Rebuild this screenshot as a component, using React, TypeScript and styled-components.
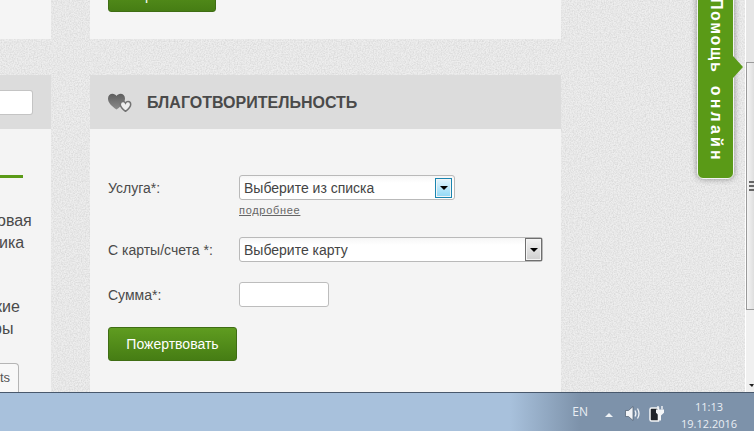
import React from 'react';
import styled, { createGlobalStyle } from 'styled-components';

const grain =
  "data:image/svg+xml,%3Csvg xmlns='http://www.w3.org/2000/svg' width='300' height='300'%3E%3Cfilter id='n'%3E%3CfeTurbulence type='fractalNoise' baseFrequency='.75' numOctaves='3' stitchTiles='stitch'/%3E%3CfeColorMatrix values='0 0 0 0 .5 0 0 0 0 .5 0 0 0 0 .5 0 0 0 .8 -.26'/%3E%3C/filter%3E%3Crect width='300' height='300' filter='url(%23n)'/%3E%3C/svg%3E";

const GlobalStyle = createGlobalStyle`
  html, body {
    margin: 0;
    padding: 0;
    overflow: hidden;
  }
  body {
    font-family: "Liberation Sans", Arial, sans-serif;
  }
`;

const Screen = styled.div`
  width: 754px;
  height: 431px;
  display: flex;
  flex-direction: column;
  overflow: hidden;
`;

const Viewport = styled.div`
  position: relative;
  flex: 1;
  min-height: 0;
  display: flex;
`;

const Page = styled.div`
  flex: 1;
  display: grid;
  grid-template-columns: 51px 471px;
  column-gap: 39px;
  background-color: #eeeeee;
  background-image: url("${grain}");
  overflow: hidden;
`;

const Column = styled.div`
  display: flex;
  flex-direction: column;
  gap: 36px;
  min-width: 0;
`;

const TopCard = styled.div`
  height: 39px;
  flex: none;
  background: #f5f5f5;
  display: flex;
  flex-direction: column;
  justify-content: flex-end;
  padding: 0 0 27px 18px;
  box-sizing: border-box;
  overflow: hidden;
`;

const Card = styled.section`
  flex: 1;
  background: #f4f4f4;
  display: flex;
  flex-direction: column;
  overflow: hidden;
`;

const CardHeader = styled.header`
  height: 54px;
  flex: none;
  background: #dcdcdc;
  display: flex;
  align-items: center;
  gap: 15px;
  padding-left: 18px;
`;

const SideHeader = styled(CardHeader)`
  padding-left: 0;
  justify-content: flex-end;
  padding-right: 18px;
`;

const SearchStub = styled.div`
  width: 33px;
  height: 25px;
  background: #fff;
  border: 1px solid #c4c4c4;
  border-left: 0;
  border-radius: 0 3px 3px 0;
  box-sizing: border-box;
`;

const Title = styled.h2`
  margin: 2px 0 0;
  font-size: 16px;
  font-weight: 700;
  color: #4a4a4a;
`;

const SideBody = styled.div`
  flex: 1;
  display: flex;
  flex-direction: column;
  align-items: flex-start;
`;

const GreenRule = styled.div`
  width: 23px;
  height: 3px;
  margin-top: 46px;
  background: #5a9a17;
`;

const SideText = styled.p<{ $gap: number }>`
  margin: ${(p) => p.$gap}px 0 0;
  font-size: 16px;
  line-height: 22px;
  color: #4a4a4a;
  white-space: nowrap;
`;

const SideLine = styled.span<{ $shift: number }>`
  display: block;
  margin-left: ${(p) => p.$shift}px;
`;

const TabStub = styled.div`
  margin-top: auto;
  width: 19px;
  height: 29px;
  box-sizing: border-box;
  background: #f8f8f8;
  border: 1px solid #b5b5b5;
  border-left: 0;
  border-bottom: 0;
  border-radius: 0 4px 0 0;
  font-size: 13px;
  line-height: 28px;
  color: #555;
`;

const Form = styled.form`
  display: flex;
  flex-direction: column;
  align-items: flex-start;
  gap: 20px;
  padding: 46px 0 0 18px;
`;

const Row = styled.div`
  display: grid;
  grid-template-columns: 131px auto;
  align-items: center;
`;

const Label = styled.label`
  font-size: 14px;
  color: #4a4a4a;
`;

const FieldStack = styled.div`
  display: flex;
  flex-direction: column;
  align-items: flex-start;
`;

const SelectBox = styled.div<{ $width: number; $flush?: boolean }>`
  width: ${(p) => p.$width}px;
  height: 25px;
  box-sizing: border-box;
  display: flex;
  align-items: center;
  justify-content: space-between;
  padding: 0 ${(p) => (p.$flush ? 0 : 2)}px 0 4px;
  background: linear-gradient(#f6f6f6, #fff 30%);
  border: 1px solid #b9b9b9;
  border-radius: 3px;
  font-size: 14px;
  color: #444;
`;

const Arrow = styled.div<{ $focused?: boolean }>`
  width: 17px;
  height: ${(p) => (p.$focused ? 20 : 23)}px;
  box-sizing: border-box;
  display: flex;
  align-items: center;
  justify-content: center;
  border: 1px solid ${(p) => (p.$focused ? '#1a85b0' : '#6f6f6f')};
  box-shadow: inset 0 0 0 1px #f4f4f4;
  background: ${(p) =>
    p.$focused ? 'linear-gradient(#e4f5fd, #90d8f6)' : 'linear-gradient(#f2f2f2, #cfcfcf)'};

  &::after {
    content: '';
    border-top: 4px solid #000;
    border-left: 4px solid transparent;
    border-right: 4px solid transparent;
    margin-top: 1px;
  }
`;

const MoreLink = styled.a`
  margin-top: 3px;
  height: 14px;
  font-size: 11px;
  line-height: 14px;
  letter-spacing: 0.7px;
  color: #666;
  text-decoration: underline;
`;

const TextInput = styled.div`
  width: 90px;
  height: 25px;
  box-sizing: border-box;
  background: #fff;
  border: 1px solid #bdbdbd;
  border-radius: 3px;
`;

const GreenButton = styled.button<{ $width: number }>`
  width: ${(p) => p.$width}px;
  height: 34px;
  flex: none;
  padding: 0;
  box-sizing: border-box;
  border: 1px solid #3f6d14;
  border-radius: 3px;
  background: linear-gradient(#5f9c20, #467d14);
  color: #fff;
  font-family: inherit;
  font-size: 14px;
`;

const HelpTab = styled.div`
  position: absolute;
  top: -20px;
  left: 697px;
  width: 37px;
  height: 199px;
  box-sizing: border-box;
  display: flex;
  align-items: flex-end;
  justify-content: center;
  padding-bottom: 15px;
  background: #5a9a17;
  border: 1px solid #f2f2f2;
  border-radius: 0 0 6px 6px;
  box-shadow: 0 0 6px rgba(0, 0, 0, 0.4);

  &::after {
    content: '';
    position: absolute;
    left: 100%;
    top: 75px;
    border-left: 10px solid #5a9a17;
    border-top: 11px solid transparent;
    border-bottom: 11px solid transparent;
  }
`;

const HelpText = styled.span`
  writing-mode: vertical-rl;
  white-space: pre;
  font-size: 16px;
  font-weight: 700;
  letter-spacing: 3.2px;
  word-spacing: -1.5px;
  color: #fff;
`;

const HelpWord = styled.span`
  letter-spacing: 1.6px;
`;

const Scrollbar = styled.div`
  width: 8px;
  flex: none;
  display: flex;
  flex-direction: column;
  background: #f0f0f0;
  border-left: 1px solid #fff;
  margin-left: -1px;
`;

const ScrollTrackTop = styled.div`
  height: 62px;
  flex: none;
  background: #e6e6e6;
`;

const ScrollThumb = styled.div`
  height: 248px;
  flex: none;
  box-sizing: border-box;
  border: 1px solid #9a9a9a;
  border-right: 0;
  background: linear-gradient(90deg, #f4f4f4, #dedede);
  display: flex;
  flex-direction: column;
  justify-content: center;
  gap: 2px;
  padding-left: 2px;
`;

const Grip = styled.i`
  display: block;
  height: 2px;
  background: #666;
`;

const ScrollDown = styled.div`
  margin-top: auto;
  height: 14px;
  display: flex;
  justify-content: flex-end;
  align-items: center;

  &::after {
    content: '';
    border-top: 3px solid #222;
    border-left: 3px solid transparent;
    border-right: 2px solid transparent;
  }
`;

const Taskbar = styled.footer`
  height: 39px;
  flex: none;
  box-sizing: border-box;
  border-top: 1px solid #48586c;
  background: linear-gradient(90deg, #a8c1dc 0, #a8c1dc 510px, #7d92aa 580px, #7d92aa 100%);
  display: flex;
  align-items: center;
  justify-content: flex-end;
  font-family: "Open Sans", sans-serif;
  font-size: 12px;
  color: #e9eef4;
`;

const Lang = styled.span`
  margin: 0 17px 2px 0;
`;

const TrayUp = styled.i`
  border-bottom: 4px solid #eef2f6;
  border-left: 4px solid transparent;
  border-right: 4px solid transparent;
  margin: 5px 12px 0 0;
`;

const TrayIcon = styled.svg`
  flex: none;
  margin-right: 8px;
  margin-top: 3px;
`;

const Clock = styled.div`
  width: 72px;
  margin-right: 9px;
  margin-top: 5px;
  text-align: center;
  font-size: 11px;
  line-height: 17px;
`;

const HeartsIcon = () => (
  <svg width="24" height="20" viewBox="0 0 24 20">
    <defs>
      <linearGradient id="bigHeart" x1="0" y1="0" x2="0" y2="1">
        <stop offset="0" stopColor="#5e5e5e" />
        <stop offset="1" stopColor="#8c8c8c" />
      </linearGradient>
    </defs>
    <path
      d="M8.500 17.500C3.200 13.500 0 10.600 0 6.400 0 3.600 2.100 1.800 4.500 1.800c1.700 0 3.100.9 4 2.300.9-1.400 2.300-2.300 4-2.300 2.400 0 4.500 1.800 4.500 4.600 0 4.200-3.200 7.100-8.500 11.100z"
      fill="url(#bigHeart)"
    />
    <path
      d="M17.500 19.300c-3.400-2.500-5.200-4.300-5.200-6.800 0-1.800 1.300-2.900 2.700-2.900 1.100 0 2 .6 2.500 1.500.5-.9 1.400-1.500 2.500-1.500 1.400 0 2.700 1.100 2.700 2.900 0 2.500-1.800 4.300-5.200 6.800z"
      fill="#efefef"
      stroke="#737373"
      strokeWidth="1.500"
    />
  </svg>
);

const SpeakerIcon = () => (
  <TrayIcon width="16" height="17" viewBox="0 0 16 17">
    <path d="M.5 5.500h3L8 1.500v14l-4.500-4h-3z" fill="#f2f4f7" stroke="#4c5a6c" strokeWidth=".7" />
    <path d="M10 5.500c1 1.800 1 4.200 0 6M12.500 3.500c1.800 3 1.800 7 0 10" fill="none" stroke="#f2f4f7" strokeWidth="1.300" />
  </TrayIcon>
);

const PowerIcon = () => (
  <TrayIcon width="16" height="17" viewBox="0 0 16 17">
    <path d="M2.500 3h7v13h-7C1.500 16 1 15.400 1 14.500v-10C1 3.600 1.500 3 2.500 3z" fill="#20242a" stroke="#f4f6f8" strokeWidth="1.500" />
    <path d="M9 1v3.500M13 1v3.500" stroke="#f4f6f8" strokeWidth="1.400" fill="none" />
    <path d="M7 4.500h8v3.300L12 10.500v5h-2v-5L7 7.800z" fill="#f4f6f8" />
  </TrayIcon>
);

export default function App() {
  return (
    <Screen>
      <GlobalStyle />
      <Viewport>
        <Page>
          <Column>
            <TopCard />
            <Card>
              <SideHeader>
                <SearchStub />
              </SideHeader>
              <SideBody>
                <GreenRule />
                <SideText $gap={32}>
                  <SideLine $shift={-3}>овая</SideLine>
                  <SideLine $shift={-1}>ика</SideLine>
                </SideText>
                <SideText $gap={42}>
                  <SideLine $shift={-5}>кие</SideLine>
                  <SideLine $shift={-7}>ры</SideLine>
                </SideText>
                <TabStub>ts</TabStub>
              </SideBody>
            </Card>
          </Column>
          <Column>
            <TopCard>
              <GreenButton $width={108}>Перевести</GreenButton>
            </TopCard>
            <Card>
              <CardHeader>
                <HeartsIcon />
                <Title>БЛАГОТВОРИТЕЛЬНОСТЬ</Title>
              </CardHeader>
              <Form>
                <FieldStack>
                  <Row>
                    <Label>Услуга*:</Label>
                    <SelectBox $width={216}>
                      Выберите из списка
                      <Arrow $focused />
                    </SelectBox>
                  </Row>
                  <Row>
                    <span />
                    <MoreLink>подробнее</MoreLink>
                  </Row>
                </FieldStack>
                <Row>
                  <Label>С карты/счета *:</Label>
                  <SelectBox $width={304} $flush>
                    Выберите карту
                    <Arrow />
                  </SelectBox>
                </Row>
                <Row>
                  <Label>Сумма*:</Label>
                  <TextInput />
                </Row>
                <GreenButton type="button" $width={129}>
                  Пожертвовать
                </GreenButton>
              </Form>
            </Card>
          </Column>
        </Page>
        <HelpTab>
          <HelpText>
            <HelpWord>Помощь</HelpWord>
            {'  онлайн'}
          </HelpText>
        </HelpTab>
        <Scrollbar>
          <ScrollTrackTop />
          <ScrollThumb>
            <Grip />
            <Grip />
            <Grip />
          </ScrollThumb>
          <ScrollDown />
        </Scrollbar>
      </Viewport>
      <Taskbar>
        <Lang>EN</Lang>
        <TrayUp />
        <SpeakerIcon />
        <PowerIcon />
        <Clock>
          11:13
          <br />
          19.12.2016
        </Clock>
      </Taskbar>
    </Screen>
  );
}
